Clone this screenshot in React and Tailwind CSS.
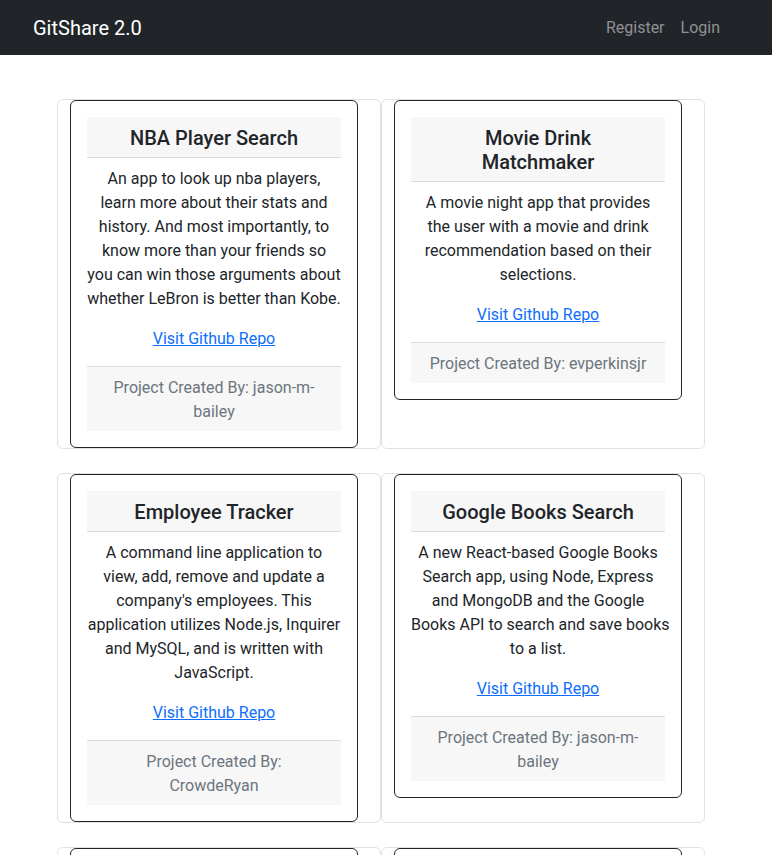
import React from "react";

const projects = [
  {
    title: "NBA Player Search",
    lines: [
      "An app to look up nba players,",
      "learn more about their stats and",
      "history. And most importantly, to",
      "know more than your friends so",
      "you can win those arguments about",
      "whether LeBron is better than Kobe.",
    ],
    author: "jason-m-bailey",
  },
  {
    title: "Movie Drink Matchmaker",
    lines: [
      "A movie night app that provides",
      "the user with a movie and drink",
      "recommendation based on their",
      "selections.",
    ],
    author: "evperkinsjr",
  },
  {
    title: "Employee Tracker",
    lines: [
      "A command line application to",
      "view, add, remove and update a",
      "company's employees. This",
      "application utilizes Node.js, Inquirer",
      "and MySQL, and is written with",
      "JavaScript.",
    ],
    author: "CrowdeRyan",
  },
  {
    title: "Google Books Search",
    lines: [
      "A new React-based Google Books",
      "Search app, using Node, Express",
      "and MongoDB and the Google",
      "Books API to search and save books",
      "to a list.",
    ],
    author: "jason-m-bailey",
  },
  {
    title: "Weather Dashboard",
    lines: [
      "A weather app that shows the",
      "current conditions and a five day",
      "forecast for any city you search.",
    ],
    author: "evperkinsjr",
  },
  {
    title: "Budget Tracker",
    lines: [
      "An offline-first budget tracker",
      "that lets users add expenses and",
      "deposits with or without a",
      "connection.",
    ],
    author: "CrowdeRyan",
  },
];

function ProjectCard({ p }) {
  return (
    <div className="border border-[#dee2e6] rounded-md flex">
      <div className="ml-[12px] w-[288px] self-start border border-[#212529] rounded-md p-4 flex flex-col text-center">
        <h5 className="bg-[#f7f7f7] border-b border-[#dcdcdc] px-4 pt-[9px] pb-[7px] mb-2 text-[20px] leading-[24px] font-medium text-[#212529]">
          {p.title}
        </h5>
        <p className="text-[16px] leading-[24px] text-[#212529] mb-4 pt-px">
          {p.lines.map((l, i) => (
            <span key={i} className="block whitespace-nowrap">
              {l}
            </span>
          ))}
        </p>
        <div className="text-[16px] leading-[24px]">
          <a href="#" className="text-[#0d6efd] underline">
            Visit Github Repo
          </a>
        </div>
        <div className="mt-[15px] bg-[#f7f7f7] border-t border-[#dcdcdc] px-4 pt-[9px] pb-[7px] text-[16px] leading-[24px] text-[#6c757d]">
          Project Created By: {p.author}
        </div>
      </div>
    </div>
  );
}

export default function App() {
  return (
    <div className="min-h-screen bg-white" style={{ fontFamily: "Roboto, 'Liberation Sans', sans-serif" }}>
      <nav className="h-[55px] bg-[#212529] flex items-center justify-between pl-[33px] pr-[44px]">
        <span className="text-white text-[20px] leading-[30px]">GitShare 2.0</span>
        <div className="flex text-[16px] leading-[24px] text-[#8f9194]">
          <a href="#" className="px-2">Register</a>
          <a href="#" className="px-2">Login</a>
        </div>
      </nav>
      <main className="pl-[57px] pt-[44px] flex flex-col gap-6">
        {[0, 2, 4].map((i) => (
          <div key={i} className="grid grid-cols-[324px_324px]">
            <ProjectCard p={projects[i]} />
            <ProjectCard p={projects[i + 1]} />
          </div>
        ))}
      </main>
    </div>
  );
}
